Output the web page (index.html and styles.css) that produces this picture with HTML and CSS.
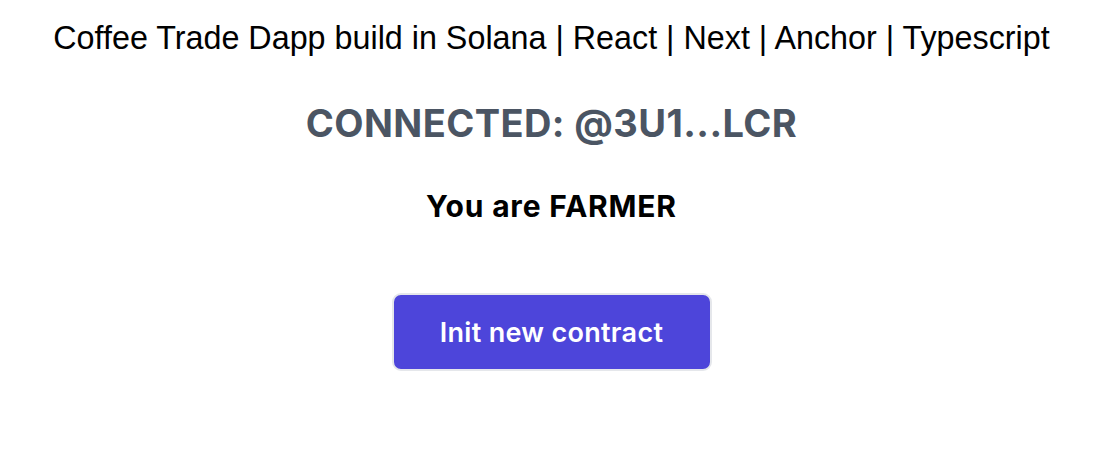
FILE: index.html
```html
<!DOCTYPE html>
<html>
<head>
<meta charset="utf-8">
<link rel="stylesheet" href="styles.css">
</head>
<body>
<main class="page">
  <h1 class="title">Coffee Trade Dapp build in Solana | React | Next | Anchor | Typescript</h1>
  <h2 class="connected">CONNECTED: @3U1...LCR</h2>
  <h3 class="role">You are FARMER</h3>
  <button class="btn">Init new contract</button>
</main>
</body>
</html>
```

FILE: styles.css
```css
html, body {
  margin: 0;
  padding: 0;
  background: #ffffff;
}
.page {
  display: flex;
  flex-direction: column;
  align-items: center;
  padding: 20px 8px 0 0;
}
.title {
  margin: 0;
  font-family: "Liberation Sans", Arial, sans-serif;
  font-weight: 400;
  font-size: 32.3px;
  line-height: 36px;
  color: #000;
}
.connected {
  margin: 47px 0 0;
  font-family: Inter, sans-serif;
  font-weight: 700;
  font-size: 38px;
  line-height: 40px;
  letter-spacing: 0.4px;
  color: #4b5563;
}
.role {
  margin: 47px 0 0;
  font-family: Inter, sans-serif;
  font-weight: 700;
  font-size: 30px;
  line-height: 32px;
  letter-spacing: 0.8px;
  color: #000;
}
.btn {
  margin-top: 71px;
  width: 320px;
  height: 78px;
  border: 2px solid #e5e7eb;
  border-radius: 9px;
  background: #4d45da;
  color: #fff;
  font-family: Inter, sans-serif;
  font-weight: 600;
  font-size: 27px;
  letter-spacing: 0.3px;
}
```
